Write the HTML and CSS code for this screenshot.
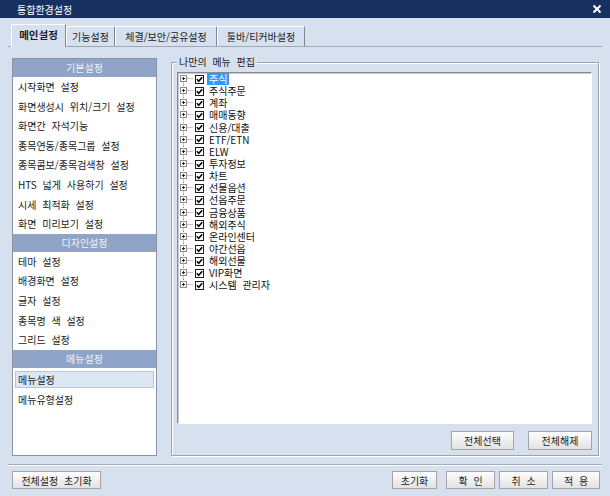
FILE: index.html
```html
<!DOCTYPE html>
<html lang="ko">
<head>
    <meta charset="UTF-8">
    <title>통합환경설정</title>
    <link rel="stylesheet" href="styles.css">
</head>
<body>
    <svg class="defs" width="0" height="0">
        <symbol id="exp" viewBox="0 0 14 12">
            <path d="M4.5 0V2.5M4.5 8.5V12M7.5 5.5H14" stroke="#8c8c8c" stroke-dasharray="1 1"/>
            <rect x="1.5" y="2.5" width="6" height="6" fill="#fff" stroke="#8c8c8c"/>
            <path d="M3 5.5H6M4.5 4V7" stroke="#222"/>
        </symbol>
        <symbol id="exp-first" viewBox="0 0 14 12">
            <path d="M4.5 8.5V12M7.5 5.5H14" stroke="#8c8c8c" stroke-dasharray="1 1"/>
            <rect x="1.5" y="2.5" width="6" height="6" fill="#fff" stroke="#8c8c8c"/>
            <path d="M3 5.5H6M4.5 4V7" stroke="#222"/>
        </symbol>
        <symbol id="exp-last" viewBox="0 0 14 12">
            <path d="M4.5 0V2.5M7.5 5.5H14" stroke="#8c8c8c" stroke-dasharray="1 1"/>
            <rect x="1.5" y="2.5" width="6" height="6" fill="#fff" stroke="#8c8c8c"/>
            <path d="M3 5.5H6M4.5 4V7" stroke="#222"/>
        </symbol>
        <symbol id="chk" viewBox="0 0 9 9">
            <rect x="0.5" y="0.5" width="8" height="8" fill="#fff" stroke="#1e1e1e"/>
            <path d="M1.8 4.2L3.7 6.2L7.2 2.2" fill="none" stroke="#000" stroke-width="1.6"/>
        </symbol>
    </svg>

    <div class="window">
        <div class="titlebar">
            <span>통합환경설정</span>
            <svg class="close" width="10" height="10" viewBox="0 0 10 10">
                <path d="M1.5 1.5L8.5 8.5M8.5 1.5L1.5 8.5" stroke="#fff" stroke-width="2"/>
            </svg>
        </div>

        <div class="tabs">
            <div class="tab active w55">메인설정</div>
            <div class="tab w49">기능설정</div>
            <div class="tab w102">체결/보안/공유설정</div>
            <div class="tab w88">툴바/티커바설정</div>
        </div>

        <div class="content">
            <div class="side">
                <div class="side-head">기본설정</div>
                <div class="side-item">시작화면 설정</div>
                <div class="side-item">화면생성시 위치/크기 설정</div>
                <div class="side-item">화면간 자석기능</div>
                <div class="side-item">종목연동/종목그룹 설정</div>
                <div class="side-item">종목콤보/종목검색창 설정</div>
                <div class="side-item">HTS 넓게 사용하기 설정</div>
                <div class="side-item">시세 최적화 설정</div>
                <div class="side-item">화면 미리보기 설정</div>
                <div class="side-head">디자인설정</div>
                <div class="side-item">테마 설정</div>
                <div class="side-item">배경화면 설정</div>
                <div class="side-item">글자 설정</div>
                <div class="side-item">종목명 색 설정</div>
                <div class="side-item">그리드 설정</div>
                <div class="side-head">메뉴설정</div>
                <div class="side-item"><span class="sel">메뉴설정</span></div>
                <div class="side-item">메뉴유형설정</div>
            </div>

            <fieldset class="group">
                <legend>나만의 메뉴 편집</legend>
                <div class="tree">
                    <div class="row"><svg class="exp"><use href="#exp-first"/></svg><svg class="chk"><use href="#chk"/></svg><span class="label on">주식</span></div>
                    <div class="row"><svg class="exp"><use href="#exp"/></svg><svg class="chk"><use href="#chk"/></svg><span class="label">주식주문</span></div>
                    <div class="row"><svg class="exp"><use href="#exp"/></svg><svg class="chk"><use href="#chk"/></svg><span class="label">계좌</span></div>
                    <div class="row"><svg class="exp"><use href="#exp"/></svg><svg class="chk"><use href="#chk"/></svg><span class="label">매매동향</span></div>
                    <div class="row"><svg class="exp"><use href="#exp"/></svg><svg class="chk"><use href="#chk"/></svg><span class="label">신용/대출</span></div>
                    <div class="row"><svg class="exp"><use href="#exp"/></svg><svg class="chk"><use href="#chk"/></svg><span class="label">ETF/ETN</span></div>
                    <div class="row"><svg class="exp"><use href="#exp"/></svg><svg class="chk"><use href="#chk"/></svg><span class="label">ELW</span></div>
                    <div class="row"><svg class="exp"><use href="#exp"/></svg><svg class="chk"><use href="#chk"/></svg><span class="label">투자정보</span></div>
                    <div class="row"><svg class="exp"><use href="#exp"/></svg><svg class="chk"><use href="#chk"/></svg><span class="label">차트</span></div>
                    <div class="row"><svg class="exp"><use href="#exp"/></svg><svg class="chk"><use href="#chk"/></svg><span class="label">선물옵션</span></div>
                    <div class="row"><svg class="exp"><use href="#exp"/></svg><svg class="chk"><use href="#chk"/></svg><span class="label">선옵주문</span></div>
                    <div class="row"><svg class="exp"><use href="#exp"/></svg><svg class="chk"><use href="#chk"/></svg><span class="label">금융상품</span></div>
                    <div class="row"><svg class="exp"><use href="#exp"/></svg><svg class="chk"><use href="#chk"/></svg><span class="label">해외주식</span></div>
                    <div class="row"><svg class="exp"><use href="#exp"/></svg><svg class="chk"><use href="#chk"/></svg><span class="label">온라인센터</span></div>
                    <div class="row"><svg class="exp"><use href="#exp"/></svg><svg class="chk"><use href="#chk"/></svg><span class="label">야간선옵</span></div>
                    <div class="row"><svg class="exp"><use href="#exp"/></svg><svg class="chk"><use href="#chk"/></svg><span class="label">해외선물</span></div>
                    <div class="row"><svg class="exp"><use href="#exp"/></svg><svg class="chk"><use href="#chk"/></svg><span class="label">VIP화면</span></div>
                    <div class="row"><svg class="exp"><use href="#exp-last"/></svg><svg class="chk"><use href="#chk"/></svg><span class="label">시스템 관리자</span></div>
                </div>
                <div class="group-btns">
                    <button class="btn w63">전체선택</button>
                    <button class="btn w64">전체해제</button>
                </div>
            </fieldset>
        </div>

        <div class="footer">
            <button class="btn w89">전체설정 초기화</button>
            <div class="footer-right">
                <button class="btn w45">초기화</button>
                <button class="btn w49 ok">확 인</button>
                <button class="btn w49">취 소</button>
                <button class="btn w48">적 용</button>
            </div>
        </div>
    </div>
</body>
</html>
```

FILE: styles.css
```css
/* base */
* {
    box-sizing: border-box;
}
body {
    margin: 0;
    font-family: "Noto Sans CJK KR", "Noto Sans", sans-serif;
    font-size: 10px;
    word-spacing: 3px;
    color: #1b1b1b;
}
.defs {
    position: absolute;
}
.window {
    width: 610px;
    height: 496px;
    background: #d6e0ef;
    display: flex;
    flex-direction: column;
}

/* title */
.titlebar {
    height: 18px;
    background: #17305f;
    color: #fff;
    display: flex;
    align-items: center;
    justify-content: space-between;
    padding: 0 8px 0 17px;
    font-size: 10px;
}

/* tabs */
.tabs {
    height: 29px;
    margin: 0 8px;
    padding-left: 3px;
    display: flex;
    align-items: flex-end;
    border-bottom: 1px solid #9ea7b4;
}
.tab {
    height: 20px;
    padding: 0;
    line-height: 19px;
    text-align: center;
    border-top: 1px solid #fff;
    border-left: 1px solid #fff;
    border-right: 1px solid #7e8794;
    white-space: nowrap;
}
.tab.active {
    height: 23px;
    margin-bottom: -1px;
    line-height: 20px;
    background: #d6e0ef;
    font-size: 10.5px;
    font-weight: bold;
}

/* content */
.content {
    height: 417px;
    display: flex;
    padding: 9px 0 8px 12px;
}
.side {
    width: 145px;
    height: 398px;
    margin-top: 2px;
    background: #fff;
    border: 1px solid #8893a3;
}
.side-head {
    height: 18px;
    line-height: 18px;
    background: #8fa4c7;
    color: #eef3fb;
    text-align: center;
}
.side-item {
    height: 19.6px;
    line-height: 19.6px;
    padding-left: 5px;
    white-space: nowrap;
}
.side-item .sel {
    display: block;
    height: 17px;
    margin: 3px 2px 0 -3px;
    padding-left: 2px;
    line-height: 15px;
    background: #dde6f3;
    border: 1px solid #b6c6de;
}

/* group box */
.group {
    width: 428px;
    margin: 0 0 0 14px;
    padding: 0 6px 6px 5px;
    border: 1px solid #9ba4b2;
    box-shadow: inset 1px 1px 0 #fff, 1px 1px 0 #fff;
}
.group legend {
    padding: 0 2px;
    line-height: 12px;
    background: #d6e0ef;
}
.tree {
    height: 352px;
    margin-top: 4px;
    background: #fff;
    border: 1px solid;
    border-color: #8a8a8a #fff #fff #8a8a8a;
    box-shadow: inset 1px 1px 0 #c9c9c9;
}
.row {
    height: 12.15px;
    display: flex;
    align-items: center;
    padding-left: 1px;
    white-space: nowrap;
}
.exp {
    width: 14px;
    height: 12px;
}
.chk {
    width: 9px;
    height: 9px;
    margin-left: 2px;
}
.label {
    margin-left: 3px;
    padding: 0 2px;
    line-height: 12.15px;
    color: #111;
}
.label.on {
    background: #3399ff;
    color: #fff;
}
.group-btns {
    display: flex;
    justify-content: flex-end;
    gap: 14px;
    margin-top: 7px;
}

/* buttons */
.btn {
    height: 18px;
    padding: 0;
    font-family: inherit;
    font-size: 10px;
    word-spacing: 3px;
    color: #1b1b1b;
    background: linear-gradient(#fefefe, #e2e2e2);
    border: 1px solid #a5a5a5;
    border-radius: 0;
}
.group-btns .btn {
    height: 19px;
}
.w45 { width: 45px; }
.w48 { width: 48px; }
.w49 { width: 49px; }
.w55 { width: 55px; }
.w63 { width: 63px; }
.w64 { width: 64px; }
.w88 { width: 88px; }
.w89 { width: 89px; }
.w102 { width: 102px; }

/* footer */
.footer {
    flex: 1;
    margin: 0 8px;
    padding: 6px 2px 0 4px;
    display: flex;
    justify-content: space-between;
    align-items: flex-start;
    border-top: 1px solid #a3adbb;
    box-shadow: inset 0 1px 0 #fff;
}
.footer-right {
    display: flex;
    gap: 4px;
}
.footer-right .ok {
    margin-left: 5px;
}
```
